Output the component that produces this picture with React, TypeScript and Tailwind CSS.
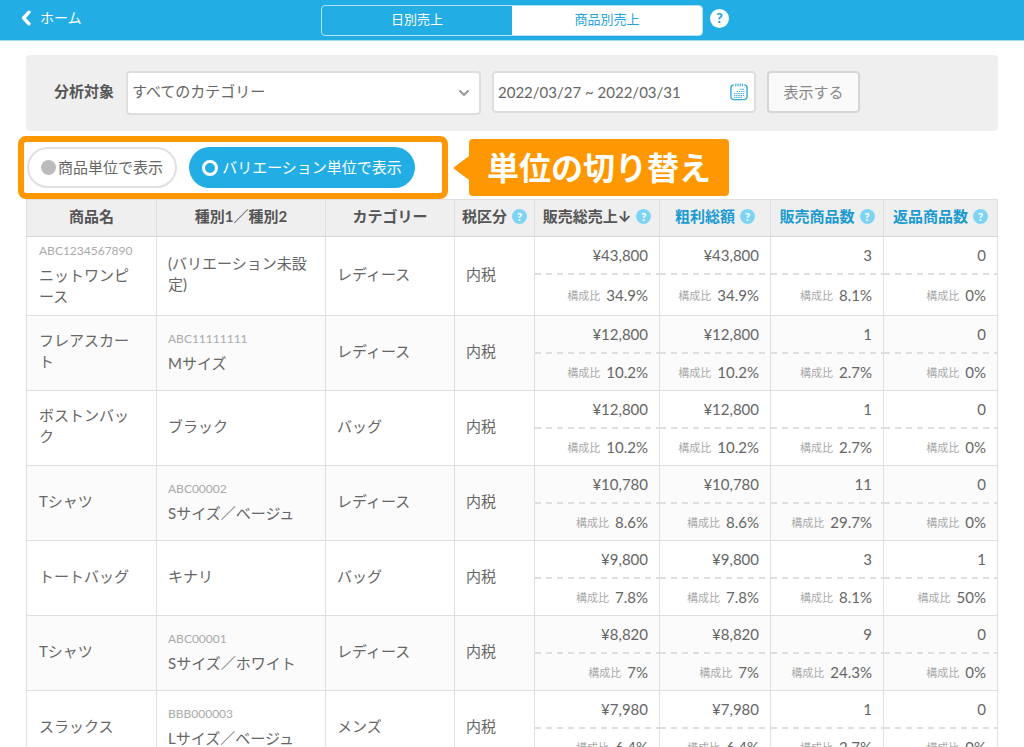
import React from 'react';

const columns = [
  { label: '商品名', width: 'w-[130px]', help: false, link: false },
  { label: '種別1／種別2', width: 'w-[169px]', help: false, link: false },
  { label: 'カテゴリー', width: 'w-[129px]', help: false, link: false },
  { label: '税区分', width: 'w-[80px]', help: true, link: false },
  { label: '販売総売上', width: 'w-[125px]', help: true, link: false, sorted: true },
  { label: '粗利総額', width: 'w-[111px]', help: true, link: true },
  { label: '販売商品数', width: 'w-[113px]', help: true, link: true },
  { label: '返品商品数', width: 'w-[114px]', help: true, link: true },
];

type Row = {
  name: string;
  code?: string;
  variation: string;
  variationCode?: string;
  category: string;
  // value and share pairs: sales, profit, sold, returned
  stats: [string, string][];
};

const rows: Row[] = [
  {
    name: 'ニットワンピース',
    code: 'ABC1234567890',
    variation: '(バリエーション未設定)',
    category: 'レディース',
    stats: [['¥43,800', '34.9%'], ['¥43,800', '34.9%'], ['3', '8.1%'], ['0', '0%']],
  },
  {
    name: 'フレアスカート',
    variation: 'Mサイズ',
    variationCode: 'ABC11111111',
    category: 'レディース',
    stats: [['¥12,800', '10.2%'], ['¥12,800', '10.2%'], ['1', '2.7%'], ['0', '0%']],
  },
  {
    name: 'ボストンバック',
    variation: 'ブラック',
    category: 'バッグ',
    stats: [['¥12,800', '10.2%'], ['¥12,800', '10.2%'], ['1', '2.7%'], ['0', '0%']],
  },
  {
    name: 'Tシャツ',
    variation: 'Sサイズ／ベージュ',
    variationCode: 'ABC00002',
    category: 'レディース',
    stats: [['¥10,780', '8.6%'], ['¥10,780', '8.6%'], ['11', '29.7%'], ['0', '0%']],
  },
  {
    name: 'トートバッグ',
    variation: 'キナリ',
    category: 'バッグ',
    stats: [['¥9,800', '7.8%'], ['¥9,800', '7.8%'], ['3', '8.1%'], ['1', '50%']],
  },
  {
    name: 'Tシャツ',
    variation: 'Sサイズ／ホワイト',
    variationCode: 'ABC00001',
    category: 'レディース',
    stats: [['¥8,820', '7%'], ['¥8,820', '7%'], ['9', '24.3%'], ['0', '0%']],
  },
  {
    name: 'スラックス',
    variation: 'Lサイズ／ベージュ',
    variationCode: 'BBB000003',
    category: 'メンズ',
    stats: [['¥7,980', '6.4%'], ['¥7,980', '6.4%'], ['1', '2.7%'], ['0', '0%']],
  },
];

const HelpButton = () => (
  <button
    type="button"
    className="flex h-[15px] w-[15px] shrink-0 items-center justify-center rounded-full bg-[#7fd4f4] text-[11px] leading-none font-black text-white"
  >
    ?
  </button>
);

const CalendarIcon = () => (
  <svg viewBox="0 0 18 18" className="h-[18px] w-[18px]" fill="none" stroke="#3aa9d4">
    <path d="M3.8 1.9A3 3 0 0 0 .9 4.8v8.8a3 3 0 0 0 3 3h10.2a3 3 0 0 0 3-3V4.8a3 3 0 0 0-2.9-2.9" strokeWidth="1.4" />
    <path d="M5.8.6v2.6M8 .6v2.6M10.200 .6v2.6M12.400 .6v2.6" strokeWidth="1.1" />
    <path d="M10.300 6.300h4.200M6.800 8.500h7.700M4 10.500h10.500M4 12.500h10.500M4 14.300h8.500" strokeWidth="1.2" strokeDasharray="1.3 .9" />
  </svg>
);

const Code = ({ children }: { children: React.ReactNode }) => (
  <div className="mb-1 text-xs leading-5 text-[#aaa]">{children}</div>
);

const Header = () => (
  <header className="grid h-[41px] grid-cols-[1fr_382px_1fr] items-center border-b border-[#a5dcf3] bg-[#23ade5] text-white">
    <a href="#" className="flex items-center gap-2 pb-1 pl-5 text-sm">
      <svg viewBox="0 0 12 16" className="h-4 w-3" fill="none" stroke="white" strokeWidth="3.4">
        <path d="M9 2.200 3.600 8 9 13.800" strokeLinecap="round" strokeLinejoin="round" />
      </svg>
      ホーム
    </a>
    <div className="flex h-[31px] overflow-hidden rounded border border-[#b5e3f6] text-[13px]">
      <button type="button" className="flex-1">日別売上</button>
      <button type="button" className="flex-1 bg-white text-[#23a5da]">商品別売上</button>
    </div>
    <button
      type="button"
      className="mb-1 ml-[7px] flex h-[19px] w-[19px] items-center justify-center rounded-full bg-white text-sm leading-none font-black text-[#23a5da]"
    >
      ?
    </button>
  </header>
);

const Filters = () => (
  <form className="flex h-[76px] items-start rounded bg-[#efefef] pt-4 pl-7">
    <label htmlFor="category" className="mr-3 leading-10 font-bold text-[#555]">分析対象</label>
    <div className="relative mr-[11px] w-[355px]">
      <select
        id="category"
        defaultValue="all"
        className="h-11 w-full appearance-none rounded border-2 border-[#dedede] bg-white pb-1 pl-1 text-[#666]"
      >
        <option value="all">すべてのカテゴリー</option>
      </select>
      <svg viewBox="0 0 10 7" className="pointer-events-none absolute top-[19px] right-3 h-[7px] w-[10px]" fill="none" stroke="#999" strokeWidth="2">
        <path d="m1 1 4 4 4-4" strokeLinecap="round" strokeLinejoin="round" />
      </svg>
    </div>
    <div className="mr-[11px] flex h-[42px] w-[264px] items-center rounded border-2 border-[#dedede] bg-white pr-1.5 pl-1">
      <input
        type="text"
        aria-label="期間"
        defaultValue="2022/03/27 ~ 2022/03/31"
        className="w-full min-w-0 text-[#666] outline-none"
      />
      <button type="button" aria-label="カレンダー">
        <CalendarIcon />
      </button>
    </div>
    <button type="button" className="h-[42px] w-[93px] rounded border-2 border-[#d6d6d6] bg-[#fafafa] text-[#888]">
      表示する
    </button>
  </form>
);

const UnitSwitch = () => (
  <div className="-ml-2 flex items-center pt-[5px]">
    <div className="flex h-[63px] w-[430px] items-center gap-3 rounded-lg border-[6px] border-[#ff9800] pl-[3px]">
      <button type="button" className="flex h-[41px] w-[150px] items-center justify-center gap-0.5 rounded-full border-2 border-[#e0e0e0] bg-white whitespace-nowrap text-[#666]">
        <span className="h-[15px] w-[15px] rounded-full bg-[#bbb]" />
        商品単位で表示
      </button>
      <button type="button" className="flex h-[41px] w-[226px] items-center justify-center gap-1 rounded-full bg-[#23ade5] whitespace-nowrap text-white">
        <span className="h-4 w-4 rounded-full border-[3px] border-white" />
        バリエーション単位で表示
      </button>
    </div>
    <svg viewBox="0 0 16 24" className="ml-[5px] h-6 w-4" fill="#ff9800">
      <path d="M0 12 16 0v24z" />
    </svg>
    <p className="flex h-[57px] items-center rounded bg-[#ff9800] px-[18px] text-[32px] font-bold text-white">
      単位の切り替え
    </p>
  </div>
);

const StatCell = ({ value, share }: { value: string; share: string }) => (
  <td className="h-[75px] border border-[#dfdfdf] p-0 text-right">
    <div className="flex h-full flex-col">
      <div className="h-9 pr-[11px] leading-9">{value}</div>
      <div className="h-[2px] bg-[repeating-linear-gradient(90deg,#dfdfdf_0_6px,transparent_6px_11px)]" />
      <div className="flex flex-1 items-center justify-end gap-1.5 pr-[11px]">
        <span className="text-[11px] text-[#aaa]">構成比</span>
        {share}
      </div>
    </div>
  </td>
);

const App = () => {
  return (
    <div className="h-screen overflow-hidden bg-white font-['Lato','Noto_Sans_CJK_JP',sans-serif] text-[15px] text-[#666]">
      <Header />
      <main className="px-[26px] pt-[14px]">
        <Filters />
        <UnitSwitch />
        <table className="w-full table-fixed border-collapse">
          <thead>
            <tr className="h-[37px] bg-[#efefef]">
              {columns.map((col) => (
                <th key={col.label} className={`${col.width} border border-[#dfdfdf] border-b-[#d6d6d6] p-0 pb-[3px] font-bold text-[#555]`}>
                  <div className="flex items-center justify-center gap-[5px] whitespace-nowrap">
                    {col.link ? (
                      <button type="button" className="text-[#1b9ad1]">{col.label}</button>
                    ) : (
                      <span>
                        {col.label}
                        {col.sorted && <span className="font-['Inter'] leading-none">↓</span>}
                      </span>
                    )}
                    {col.help && <HelpButton />}
                  </div>
                </th>
              ))}
            </tr>
          </thead>
          <tbody className="leading-[21px]">
            {rows.map((row, i) => (
              <tr key={i} className="even:bg-[#fbfbfb]">
                <td className="border border-[#dfdfdf] pt-1 pr-5 pb-2 pl-3">
                  {row.code && <Code>{row.code}</Code>}
                  <div className="break-all">{row.name}</div>
                </td>
                <td className="border border-[#dfdfdf] px-[11px] pt-1 pb-2">
                  {row.variationCode && <Code>{row.variationCode}</Code>}
                  {row.variation}
                </td>
                <td className="border border-[#dfdfdf] px-[11px] pb-[3px]">{row.category}</td>
                <td className="border border-[#dfdfdf] px-[11px] pb-[3px]">内税</td>
                {row.stats.map(([value, share], j) => (
                  <StatCell key={j} value={value} share={share} />
                ))}
              </tr>
            ))}
          </tbody>
        </table>
      </main>
    </div>
  );
};

export default App;
